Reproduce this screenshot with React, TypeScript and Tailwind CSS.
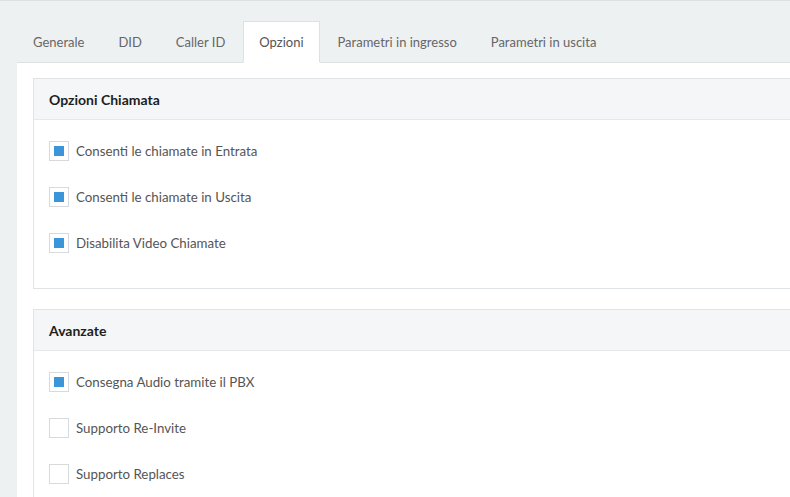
import React from 'react';

const tabs = ['Generale', 'DID', 'Caller ID', 'Opzioni', 'Parametri in ingresso', 'Parametri in uscita'];

const sections = [
  {
    title: 'Opzioni Chiamata',
    items: [
      { label: 'Consenti le chiamate in Entrata', checked: true },
      { label: 'Consenti le chiamate in Uscita', checked: true },
      { label: 'Disabilita Video Chiamate', checked: true },
    ],
  },
  {
    title: 'Avanzate',
    items: [
      { label: 'Consegna Audio tramite il PBX', checked: true },
      { label: 'Supporto Re-Invite', checked: false },
      { label: 'Supporto Replaces', checked: false },
    ],
  },
];

function Checkbox({ checked }: { checked: boolean }) {
  return (
    <span className="w-[20px] h-[20px] border border-[#d7dadc] bg-white flex items-center justify-center shrink-0">
      {checked && <span className="w-[10px] h-[10px] bg-[#3a96d8]" />}
    </span>
  );
}

export default function App() {
  return (
    <div
      className="h-[497px] w-[790px] overflow-hidden bg-[#eef1f2] border-t border-[#dde1e3] text-[13.3px]"
      style={{ fontFamily: 'Lato, "Open Sans", sans-serif' }}
    >
      <div className="pl-[17px] pt-[20px]">
        {/* Tabs */}
        <ul className="flex border-b border-[#dde1e3] text-[13px]">
          {tabs.map((t) => {
            const active = t === 'Opzioni';
            return (
              <li key={t} className="-mb-px mr-[2px]">
                <span
                  className={
                    active
                      ? 'block px-[15px] py-[10px] leading-[20px] border border-[#dde1e3] border-b-white bg-white text-[#555]'
                      : 'block px-[15px] py-[10px] leading-[20px] border border-transparent text-[#666]'
                  }
                >
                  {t}
                </span>
              </li>
            );
          })}
        </ul>

        {/* Panel */}
        <div className="bg-white pt-[15px] pl-[16px] h-[440px] flex flex-col gap-[20px]">
          {sections.map((s) => (
            <div key={s.title} className="border border-r-0 border-[#e1e4e6]">
              <div className="h-[41px] bg-[#f5f6f7] border-b border-[#e6e8ea] px-[15px] flex items-center font-bold text-[14px] text-[#1e1e1e]">
                {s.title}
              </div>
              <div className="px-[15px] pt-[21px] pb-[35px] flex flex-col gap-[26px]">
                {s.items.map((it) => (
                  <label key={it.label} className="flex items-center gap-[7px] text-[#555] leading-[20px]">
                    <Checkbox checked={it.checked} />
                    <span>{it.label}</span>
                  </label>
                ))}
              </div>
            </div>
          ))}
        </div>
      </div>
    </div>
  );
}
